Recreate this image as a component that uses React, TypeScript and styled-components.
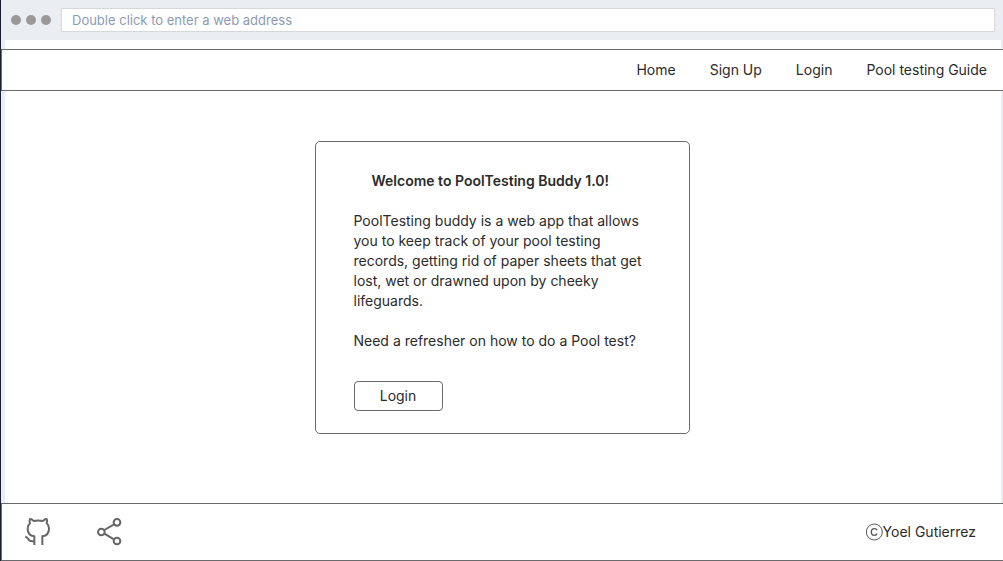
import React from "react";
import styled, { createGlobalStyle } from "styled-components";

const ink = "#2b2b2b";
const line = "#6a6a6c";
const chrome = "#eaedf2";

const GlobalStyle = createGlobalStyle`
  *, *::before, *::after { box-sizing: border-box; }
  body {
    margin: 0;
    background: #fff;
    color: ${ink};
    font: 14px/20px Inter, "Liberation Sans", sans-serif;
  }
  h1, p { margin: 0; }
`;

const BrowserWindow = styled.div`
  min-height: 100vh;
  display: flex;
  flex-direction: column;
  border-left: 1px solid #1b2130;
`;

const Toolbar = styled.div`
  display: flex;
  align-items: center;
  gap: 10px;
  height: 40px;
  padding: 0 8px 0 10px;
  background: ${chrome};
`;

const Dots = styled.div`
  display: flex;
  gap: 5px;
`;

const Dot = styled.span`
  width: 10px;
  height: 10px;
  border-radius: 50%;
  background: #999;
`;

const AddressBar = styled.input`
  flex: 1;
  min-width: 0;
  height: 24px;
  padding: 0 10px;
  border: 1px solid #d5d7da;
  border-radius: 0;
  background: #fff;
  color: #8c9ab5;
  font: 13px/20px Inter, "Liberation Sans", sans-serif;
  &::placeholder { color: #8c9ab5; opacity: 1; }
`;

const Gutter = styled.div`
  height: 9px;
  border: solid ${chrome};
  border-width: 0 2px 0 4px;
`;

const Header = styled.header`
  border: solid ${line};
  border-width: 1px 0 1px 1px;
`;

const Nav = styled.nav`
  display: flex;
  justify-content: flex-end;
  gap: 34px;
  padding: 10px 16px;
`;

const NavLink = styled.a`
  color: inherit;
  text-decoration: none;
`;

const Main = styled.main`
  flex: 1;
  display: flex;
  justify-content: center;
  align-items: flex-start;
  padding: 50px 18px 50px 16px;
  border: solid ${chrome};
  border-width: 0 2px 0 4px;
`;

const Card = styled.section`
  display: flex;
  flex-direction: column;
  align-items: flex-start;
  gap: 20px;
  width: 100%;
  max-width: 375px;
  padding: 29px 38px 22px;
  border: 1px solid ${line};
  border-radius: 5px;
`;

const Title = styled.h1`
  padding-left: 18px;
  font-size: 14px;
  font-weight: 600;
`;

const LoginButton = styled.button`
  width: 89px;
  height: 30px;
  margin-top: 10px;
  padding: 0;
  border: 1px solid ${line};
  border-radius: 4px;
  background: #fff;
  color: inherit;
  font: inherit;
`;

const Footer = styled.footer`
  display: flex;
  align-items: center;
  justify-content: space-between;
  height: 58px;
  padding: 0 27px 0 22px;
  border: solid ${line};
  border-width: 1px 0 1px 1px;
`;

const IconLinks = styled.div`
  display: flex;
  gap: 43px;
`;

const IconLink = styled.a`
  display: flex;
  color: #666;
`;

const Credit = styled.p`
  display: flex;
  align-items: center;
`;

const stroke = {
  fill: "none",
  stroke: "currentColor",
  strokeWidth: 6,
  strokeLinejoin: "round",
} as const;

const OctocatIcon = () => (
  <svg width="28" height="30" viewBox="72 81 84 90" aria-hidden="true" {...stroke}>
    <path d="M103 165V139C91 137 83 128 83 116C83 109 85 104 90 100C88 95 88 91 90 87C94 87 98 89 101 93C110 91 120 91 129 93C132 89 136 87 140 87C142 91 142 95 140 100C145 104 147 109 147 116C147 128 139 137 127 139V165" />
    <path d="M76 140C84 142 84 147 88 151C92 154 97 154 103 153" />
  </svg>
);

const ShareIcon = () => (
  <svg width="28" height="30" viewBox="285 81 84 90" aria-hidden="true" {...stroke}>
    <circle cx="351" cy="97" r="10" />
    <circle cx="304" cy="126" r="10" />
    <circle cx="351" cy="153" r="10" />
    <path d="M313 120L342 103M313 131L342 148" />
  </svg>
);

const CopyrightIcon = () => (
  <svg width="17" height="18" viewBox="2 0 51 54" fill="none" stroke="#555" strokeWidth="3" role="img" aria-label="Copyright">
    <circle cx="27" cy="27" r="24" />
    <path d="M35 22C34 19 31 17 27 17C21 17 18 21 18 27C18 33 21 37 27 37C31 37 34 35 35 31" strokeWidth="4" />
  </svg>
);

const links = ["Home", "Sign Up", "Login", "Pool testing Guide"];

export default function App() {
  return (
    <>
      <GlobalStyle />
      <BrowserWindow>
        <Toolbar>
          <Dots>
            <Dot />
            <Dot />
            <Dot />
          </Dots>
          <AddressBar
            type="text"
            aria-label="Web address"
            placeholder="Double click to enter a web address"
          />
        </Toolbar>
        <Gutter />
        <Header>
          <Nav>
            {links.map((label) => (
              <NavLink key={label} href="#">
                {label}
              </NavLink>
            ))}
          </Nav>
        </Header>
        <Main>
          <Card>
            <Title>Welcome to PoolTesting Buddy 1.0!</Title>
            <p>
              PoolTesting buddy is a web app that allows you to keep track of
              your pool testing records, getting rid of paper sheets that get
              lost, wet or drawned upon by cheeky lifeguards.
            </p>
            <p>Need a refresher on how to do a Pool test?</p>
            <LoginButton type="button">Login</LoginButton>
          </Card>
        </Main>
        <Footer>
          <IconLinks>
            <IconLink href="#" aria-label="GitHub">
              <OctocatIcon />
            </IconLink>
            <IconLink href="#" aria-label="Share">
              <ShareIcon />
            </IconLink>
          </IconLinks>
          <Credit>
            <CopyrightIcon />
            Yoel Gutierrez
          </Credit>
        </Footer>
      </BrowserWindow>
    </>
  );
}
